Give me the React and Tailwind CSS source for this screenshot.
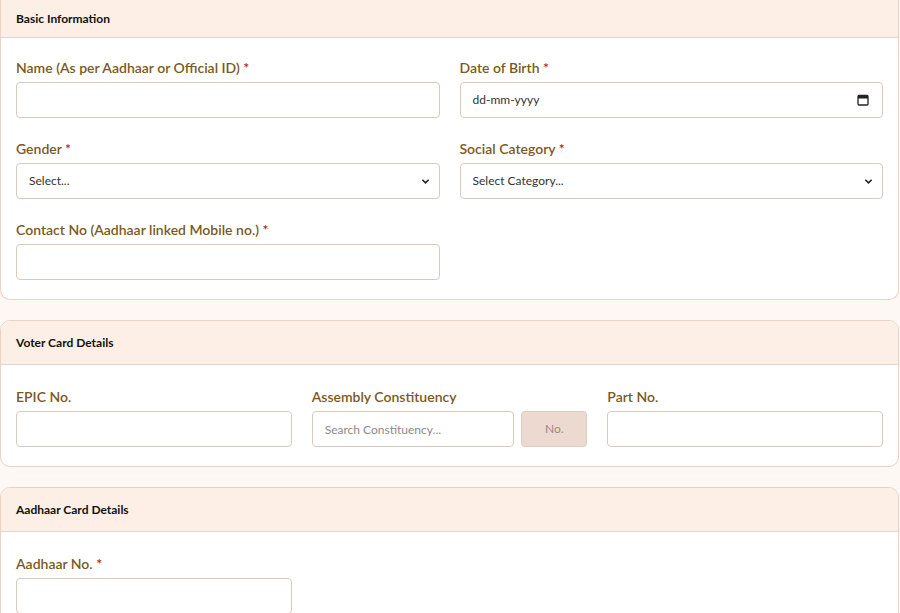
import React from 'react';

const Label = ({ children, req }) => (
  <label className="block text-[14px] font-semibold text-[#7a5a1c] mb-[5px] leading-[18px]">
    {children}{req && <span className="text-[#b3261e]"> *</span>}
  </label>
);

const inputCls = 'w-full h-[36px] px-3 text-[12px] text-[#333] bg-white border border-[#dcc9bd] rounded-[4px] outline-none';

const Card = ({ title, children, top }) => (
  <div className={`bg-white border border-[#e8d3c6] rounded-[10px] overflow-hidden ${top ? 'rounded-t-none border-t-0' : ''}`}>
    <div className={`bg-[#fdefe6] border-b border-[#e3d5cc] px-[15px] flex items-center text-[12px] font-bold text-[#111] ${top ? 'h-[38px]' : 'h-[44px]'}`}>
      {title}
    </div>
    <div className="px-[15px] pt-[21px] pb-[19px]">{children}</div>
  </div>
);

const Select = ({ placeholder }) => (
  <div className="relative">
    <select className={`${inputCls} appearance-none`} defaultValue="">
      <option value="">{placeholder}</option>
    </select>
    <svg className="absolute right-[10px] top-[14px] w-[9px] h-[9px] pointer-events-none" viewBox="0 0 10 10">
      <path d="M1.5 3l3.5 3.5L8.5 3" fill="none" stroke="#222" strokeWidth="1.8" />
    </svg>
  </div>
);

export default function App() {
  return (
    <div className="min-h-[613px] bg-[#fdf8f4] pr-px flex flex-col gap-[20px] overflow-hidden" style={{ fontFamily: 'Lato, "Open Sans", sans-serif' }}>
      <Card title="Basic Information" top>
        <div className="grid grid-cols-2 gap-x-[20px] gap-y-[22px]">
          <div>
            <Label req>Name (As per Aadhaar or Official ID)</Label>
            <input className={inputCls} />
          </div>
          <div>
            <Label req>Date of Birth</Label>
            <div className="relative">
              <div className={`${inputCls} flex items-center text-[12.5px] text-[#222]`}>dd-mm-yyyy</div>
              <svg className="absolute right-[14px] top-[12px] w-[12px] h-[12px]" viewBox="0 0 12 12">
                <rect x="1" y="1.5" width="10" height="9.5" rx="1" fill="none" stroke="#222" strokeWidth="1.3" />
                <rect x="1" y="1.5" width="10" height="3" fill="#222" />
              </svg>
            </div>
          </div>
          <div>
            <Label req>Gender</Label>
            <Select placeholder="Select..." />
          </div>
          <div>
            <Label req>Social Category</Label>
            <Select placeholder="Select Category..." />
          </div>
          <div>
            <Label req>Contact No (Aadhaar linked Mobile no.)</Label>
            <input className={inputCls} />
          </div>
        </div>
      </Card>
      <Card title="Voter Card Details">
        <div className="grid grid-cols-3 gap-x-[20px] pt-[2px]">
          <div>
            <Label>EPIC No.</Label>
            <input className={inputCls} />
          </div>
          <div>
            <Label>Assembly Constituency</Label>
            <div className="flex gap-[7px]">
              <input className={`${inputCls} flex-1 min-w-0 placeholder:text-[#8a8a8a]`} placeholder="Search Constituency..." />
              <button className="w-[66px] h-[36px] shrink-0 rounded-[4px] bg-[#ecd9cf] border border-[#e0cbc0] text-[12px] text-[#9a8a84]">No.</button>
            </div>
          </div>
          <div>
            <Label>Part No.</Label>
            <input className={inputCls} />
          </div>
        </div>
      </Card>
      <Card title="Aadhaar Card Details">
        <div className="grid grid-cols-3 gap-x-[20px] pt-[2px]">
          <div>
            <Label req>Aadhaar No.</Label>
            <input className={inputCls} />
          </div>
        </div>
      </Card>
    </div>
  );
}
